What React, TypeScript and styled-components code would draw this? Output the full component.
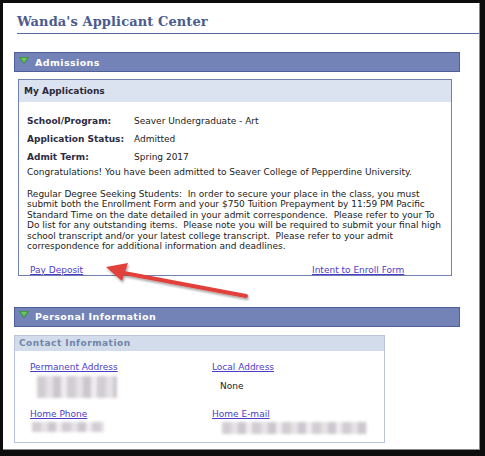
import styled, { createGlobalStyle } from 'styled-components'

const GlobalStyle = createGlobalStyle`
  html, body {
    margin: 0;
    padding: 0;
    background: #0d0d0d;
  }
  body {
    width: 485px;
    height: 456px;
    overflow: hidden;
    font-family: "DejaVu Sans", Verdana, sans-serif;
  }
`

const Window = styled.div`
  position: relative;
  box-sizing: border-box;
  margin: 3px 0 0 3px;
  width: 477px;
  height: 447px;
  background: #fff;
  border-right: 1px solid #8a8a8a;
  border-bottom: 1px solid #8a8a8a;
  overflow: hidden;
`

const PageTitle = styled.h1`
  margin: 0 0 0 14px;
  padding: 11px 0 3px 0;
  font-family: "DejaVu Serif", Georgia, serif;
  font-weight: bold;
  font-size: 13px;
  line-height: 16px;
  letter-spacing: 0.1px;
  color: #4b5b8f;
  border-bottom: 1px solid #5a6aa0;
`

const SectionBar = styled.div<{ $top: number }>`
  box-sizing: border-box;
  margin: ${p => p.$top}px 0 0 11px;
  width: 446px;
  height: 20px;
  display: flex;
  align-items: center;
  gap: 6px;
  padding-left: 4px;
  background: #7383b8;
  border: 1px solid #4f5f9a;
  color: #fff;
  font-weight: bold;
  font-size: 9.5px;
  letter-spacing: 0.4px;
`

const Box = styled.div`
  box-sizing: border-box;
  margin: 7px 0 0 15px;
  width: 434px;
  border: 1px solid #7080b0;
`

const BoxHead = styled.div`
  height: 22px;
  display: flex;
  align-items: center;
  padding-left: 5px;
  background: #dce3f0;
  color: #2a2a3a;
  font-weight: bold;
  font-size: 9px;
`

const BoxBody = styled.div`
  padding: 10px 6px 0 8px;
  font-size: 9px;
  color: #222;
`

const Row = styled.div`
  display: grid;
  grid-template-columns: 107px 1fr;
  height: 18px;
  align-items: center;
`

const Label = styled.span`
  font-weight: bold;
  color: #2c2c44;
`

const Para = styled.p<{ $top: number }>`
  margin: ${p => p.$top}px 0 0 0;
  line-height: 10.5px;
  white-space: pre-wrap;
`

const LinkRow = styled.div`
  display: flex;
  margin-top: 13px;
  padding-left: 3px;
  height: 10px;
  align-items: center;
`

const Link = styled.a<{ $w?: number }>`
  width: ${p => (p.$w ? `${p.$w}px` : 'auto')};
  color: #4b3dc8;
  text-decoration: underline;
  font-size: 9px;
  cursor: pointer;
`

const Triangle = styled.svg`
  flex: none;
  width: 10px;
  height: 7px;
  margin-top: -4px;
`

const ContactBox = styled.div`
  box-sizing: border-box;
  margin: 8px 0 0 11px;
  width: 371px;
  height: 108px;
  border: 1px solid #b8c4dc;
`

const ContactHead = styled.div`
  height: 15px;
  display: flex;
  align-items: center;
  padding-left: 4px;
  background: #d3dcea;
  color: #6f85a9;
  font-weight: bold;
  font-size: 9px;
  letter-spacing: 0.5px;
`

const ContactGrid = styled.div`
  display: grid;
  grid-template-columns: 182px 1fr;
  padding: 11px 0 0 15px;
  row-gap: 6px;
  font-size: 9px;
`

const Field = styled.div`
  display: flex;
  flex-direction: column;
  align-items: flex-start;
  height: 41px;
`

const Blur = styled.div<{ $w: number; $h: number; $x: number; $y: number }>`
  margin: ${p => p.$y}px 0 0 ${p => p.$x}px;
  width: ${p => p.$w}px;
  height: ${p => p.$h}px;
  background: repeating-linear-gradient(90deg, #cbc5cc 0 9px, #e0dde0 9px 16px, #c4bec6 16px 24px, #ece9ec 24px 30px);
  filter: blur(1.5px);
  opacity: 0.85;
`

const Plain = styled.span`
  margin: 9px 0 0 8px;
  color: #222;
`

const Arrow = styled.svg`
  position: absolute;
  left: 97px;
  top: 256px;
  width: 152px;
  height: 44px;
`

const DownTriangle = () => (
  <Triangle viewBox="0 0 10 7">
    <polygon points="0,0 10,0 5,7" fill="#2f8f2c" />
    <polygon points="1.5,0.8 8.5,0.8 5,5.4" fill="#6cc85e" />
  </Triangle>
)

export default function App() {
  return (
    <>
      <GlobalStyle />
      <Window>
        <PageTitle>Wanda's Applicant Center</PageTitle>

        <SectionBar $top={18}>
          <DownTriangle />
          Admissions
        </SectionBar>

        <Box>
          <BoxHead>My Applications</BoxHead>
          <BoxBody>
            <Row><Label>School/Program:</Label><span>Seaver Undergraduate - Art</span></Row>
            <Row><Label>Application Status:</Label><span>Admitted</span></Row>
            <Row><Label>Admit Term:</Label><span>Spring 2017</span></Row>
            <Para $top={1}>Congratulations! You have been admitted to Seaver College of Pepperdine University.</Para>
            <Para $top={11}>
              {'Regular Degree Seeking Students:  In order to secure your place in the class, you must\nsubmit both the Enrollment Form and your $750 Tuition Prepayment by 11:59 PM Pacific\nStandard Time on the date detailed in your admit correspondence.  Please refer to your To\nDo list for any outstanding items.  Please note you will be required to submit your final high\nschool transcript and/or your latest college transcript.  Please refer to your admit\ncorrespondence for additional information and deadlines.'}
            </Para>
            <LinkRow>
              <Link $w={282}>Pay Deposit</Link>
              <Link>Intent to Enroll Form</Link>
            </LinkRow>
          </BoxBody>
        </Box>

        <SectionBar $top={31}>
          <DownTriangle />
          Personal Information
        </SectionBar>

        <ContactBox>
          <ContactHead>Contact Information</ContactHead>
          <ContactGrid>
            <Field>
              <Link>Permanent Address</Link>
              <Blur $w={80} $h={22} $x={7} $y={4} />
            </Field>
            <Field>
              <Link>Local Address</Link>
              <Plain>None</Plain>
            </Field>
            <Field>
              <Link>Home Phone</Link>
              <Blur $w={72} $h={10} $x={2} $y={3} />
            </Field>
            <Field>
              <Link>Home E-mail</Link>
              <Blur $w={145} $h={12} $x={10} $y={3} />
            </Field>
          </ContactGrid>
        </ContactBox>

        <Arrow viewBox="0 0 152 44">
          <defs>
            <filter id="sh" x="-10%" y="-30%" width="130%" height="170%">
              <feDropShadow dx="1" dy="2" stdDeviation="1.2" floodColor="#000" floodOpacity="0.35" />
            </filter>
          </defs>
          <g filter="url(#sh)">
            <line x1="146" y1="37" x2="24" y2="14" stroke="#e2403b" strokeWidth="4" strokeLinecap="round" />
            <polygon points="6,8 28,4 22,22" fill="#e2403b" />
          </g>
        </Arrow>
      </Window>
    </>
  )
}
